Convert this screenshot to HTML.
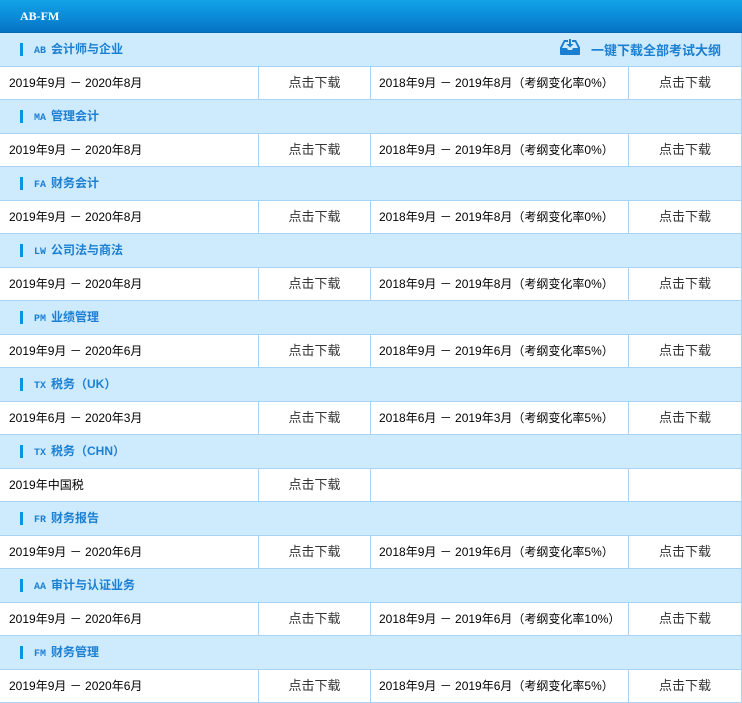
<!DOCTYPE html>
<html><head><meta charset="utf-8"><style>
*{margin:0;padding:0;box-sizing:border-box}
body{width:742px;height:702px;overflow:hidden;background:#fff;font-family:"Liberation Sans","Noto Sans CJK SC",sans-serif;font-size:12px}
.top{height:33px;background:linear-gradient(180deg,#12a3e6 0%,#0a8ad8 55%,#0672c2 100%);border-bottom:1px solid #0668b5;color:#fff;font-weight:bold;font-family:"Liberation Serif","Noto Serif CJK SC",serif;font-size:12px;line-height:32px;padding-left:20px}
.sec{height:34px;background:#cdebfd;border-bottom:1px solid #a9d3f5;position:relative;line-height:33px;padding-left:34px;color:#1c7fd2;font-weight:bold;font-size:12px;border-right:1px solid #a9d3f5}
.sec:before{content:"";position:absolute;left:20px;top:10px;width:3px;height:13px;background:#0a92e4}
.sec b{font-family:"Liberation Mono",monospace;font-size:10px;margin-right:5px}
.row{height:33px;display:flex;border-bottom:1px solid #a9d3f5;line-height:32px;color:#000}
.row div{border-right:1px solid #a9d3f5}
.c1{width:259px;padding-left:9px}
.c2{width:112px;text-align:center;color:#333;font-size:13px}
.c3{width:258px;padding-left:8px}
.c4{width:113px;text-align:center;color:#333;font-size:13px}
.dl{position:absolute;right:20px;top:1px;color:#1c7fd2;font-size:13px}
.dl svg{position:absolute;left:-32px;top:5px}
</style></head><body>
<div class="top">AB-FM</div>

<div class="sec"><b>AB</b>会计师与企业<span class="dl"><svg width="22" height="16" viewBox="0 0 22 16"><path d="M5 1h4v2H6L3 9h5l1 2h4l1-2h5L16 3h-3V1h4l4 7.5V15a1 1 0 0 1-1 1H2a1 1 0 0 1-1-1V8.5z" fill="#1a7fd0"/><path d="M10 0h2v5h2.5L11 8.5 7.5 5H10z" fill="#1a7fd0"/></svg>一键下载全部考试大纲</span></div>
<div class="row"><div class="c1">2019年9月 － 2020年8月</div><div class="c2">点击下载</div><div class="c3">2018年9月 － 2019年8月（考纲变化率0%）</div><div class="c4">点击下载</div></div>

<div class="sec"><b>MA</b>管理会计</div>
<div class="row"><div class="c1">2019年9月 － 2020年8月</div><div class="c2">点击下载</div><div class="c3">2018年9月 － 2019年8月（考纲变化率0%）</div><div class="c4">点击下载</div></div>

<div class="sec"><b>FA</b>财务会计</div>
<div class="row"><div class="c1">2019年9月 － 2020年8月</div><div class="c2">点击下载</div><div class="c3">2018年9月 － 2019年8月（考纲变化率0%）</div><div class="c4">点击下载</div></div>

<div class="sec"><b>LW</b>公司法与商法</div>
<div class="row"><div class="c1">2019年9月 － 2020年8月</div><div class="c2">点击下载</div><div class="c3">2018年9月 － 2019年8月（考纲变化率0%）</div><div class="c4">点击下载</div></div>

<div class="sec"><b>PM</b>业绩管理</div>
<div class="row"><div class="c1">2019年9月 － 2020年6月</div><div class="c2">点击下载</div><div class="c3">2018年9月 － 2019年6月（考纲变化率5%）</div><div class="c4">点击下载</div></div>

<div class="sec"><b>TX</b>税务（UK）</div>
<div class="row"><div class="c1">2019年6月 － 2020年3月</div><div class="c2">点击下载</div><div class="c3">2018年6月 － 2019年3月（考纲变化率5%）</div><div class="c4">点击下载</div></div>

<div class="sec"><b>TX</b>税务（CHN）</div>
<div class="row"><div class="c1">2019年中国税</div><div class="c2">点击下载</div><div class="c3"></div><div class="c4"></div></div>

<div class="sec"><b>FR</b>财务报告</div>
<div class="row"><div class="c1">2019年9月 － 2020年6月</div><div class="c2">点击下载</div><div class="c3">2018年9月 － 2019年6月（考纲变化率5%）</div><div class="c4">点击下载</div></div>

<div class="sec"><b>AA</b>审计与认证业务</div>
<div class="row"><div class="c1">2019年9月 － 2020年6月</div><div class="c2">点击下载</div><div class="c3">2018年9月 － 2019年6月（考纲变化率10%）</div><div class="c4">点击下载</div></div>

<div class="sec"><b>FM</b>财务管理</div>
<div class="row"><div class="c1">2019年9月 － 2020年6月</div><div class="c2">点击下载</div><div class="c3">2018年9月 － 2019年6月（考纲变化率5%）</div><div class="c4">点击下载</div></div>
</body></html>
